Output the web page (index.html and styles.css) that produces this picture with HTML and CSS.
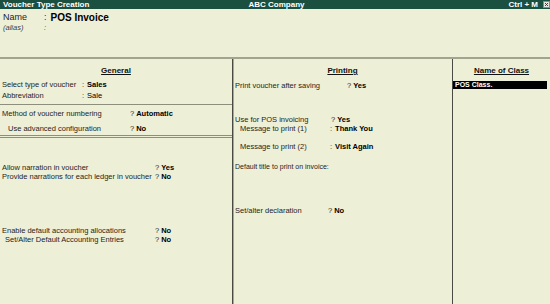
FILE: index.html
```html
<!DOCTYPE html>
<html>
<head>
    <title>Voucher Type Creation</title>
    <link rel="stylesheet" href="styles.css">
</head>
<body>
    <div class="title-bar">
        <div class="title-left">Voucher Type Creation</div>
        <div class="title-center">ABC Company</div>
        <div class="title-right">
            <span>Ctrl + M</span>
            <svg class="close-box" width="7" height="7" viewBox="0 0 7 7">
                <rect x="0.5" y="0.5" width="6" height="6" fill="#e6e6e0" stroke="#8a8a8a"/>
                <path d="M2 2 L5 5 M5 2 L2 5" stroke="#333" stroke-width="0.9"/>
            </svg>
        </div>
    </div>

    <div class="name-area">
        <div class="name-row">
            <span class="name-label">Name</span>
            <span class="sep">:</span>
            <span class="name-value">POS Invoice</span>
        </div>
        <div class="alias-row">
            <span class="name-label">(alias)</span>
            <span class="sep">:</span>
        </div>
    </div>

    <div class="columns">
        <div class="col col-general">
            <div class="col-title">General</div>

            <div class="section voucher-type">
                <div class="row"><span class="label">Select type of voucher</span><span class="sep">:</span> <span class="val">Sales</span></div>
                <div class="row"><span class="label">Abbreviation</span><span class="sep">:</span> <span class="val plain">Sale</span></div>
            </div>

            <div class="section numbering">
                <div class="row"><span class="label">Method of voucher numbering</span>? <span class="val">Automatic</span></div>
                <div class="row indent"><span class="label">Use advanced configuration</span>? <span class="val">No</span></div>
            </div>

            <div class="section narration">
                <div class="row"><span class="label">Allow narration in voucher</span>? <span class="val">Yes</span></div>
                <div class="row"><span class="label">Provide narrations for each ledger in voucher</span>? <span class="val">No</span></div>
            </div>

            <div class="section accounting">
                <div class="row"><span class="label">Enable default accounting allocations</span>? <span class="val">No</span></div>
                <div class="row indent"><span class="label">Set/Alter Default Accounting Entries</span>? <span class="val">No</span></div>
            </div>
        </div>

        <div class="col col-printing">
            <div class="col-title">Printing</div>

            <div class="row print-after"><span class="label">Print voucher after saving</span>? <span class="val">Yes</span></div>

            <div class="section pos">
                <div class="row"><span class="label">Use for POS invoicing</span>? <span class="val">Yes</span></div>
                <div class="row message"><span class="label">Message to print (1)</span><span class="sep">:</span> <span class="val">Thank You</span></div>
                <div class="row message second"><span class="label">Message to print (2)</span><span class="sep">:</span> <span class="val">Visit Again</span></div>
            </div>

            <div class="row default-title">Default title to print on invoice:</div>

            <div class="row declaration"><span class="label">Set/alter declaration</span>? <span class="val">No</span></div>
        </div>

        <div class="col col-class">
            <div class="col-title">Name of Class</div>
            <div class="class-item">POS Class.</div>
        </div>
    </div>
</body>
</html>
```

FILE: styles.css
```css
body {
    margin: 0;
    width: 550px;
    height: 304px;
    display: flex;
    flex-direction: column;
    font-family: "Liberation Sans", Arial, sans-serif;
    font-size: 7.5px;
    color: #1e1e1e;
    background-color: #edefd6;
    overflow: hidden;
}

/* top bar */
.title-bar {
    display: flex;
    height: 9px;
    line-height: 9px;
    background-color: #1b4f40;
    color: #fff;
    font-size: 8px;
    font-weight: bold;
}

.title-left {
    flex: 1;
    padding-left: 3px;
}

.title-right {
    flex: 1;
    display: flex;
    justify-content: flex-end;
    align-items: center;
    gap: 5px;
}

.close-box {
    display: block;
}

/* name block */
.name-area {
    box-sizing: border-box;
    height: 50px;
    padding: 3px 0 0 3px;
    border-bottom: 2px solid #a3a38f;
}

.name-row,
.alias-row {
    display: flex;
}

.name-row {
    line-height: 11px;
    font-size: 9px;
}

.name-label {
    width: 41px;
}

.name-row .sep {
    margin-right: 4px;
}

.name-value {
    font-size: 10px;
    font-weight: bold;
    color: #000;
}

.alias-row {
    line-height: 9px;
    font-style: italic;
    color: #3a3a3a;
}

/* columns */
.columns {
    flex: 1;
    display: flex;
}

.col-general {
    width: 232px;
}

.col-printing {
    width: 219px;
    border-left: 1px solid #4a4a44;
    box-shadow: inset 1px 0 #a8a894;
}

.col-class {
    flex: 1;
    border-left: 1px solid #4a4a44;
}

.col-title {
    margin-top: 7px;
    line-height: 9px;
    font-size: 8px;
    font-weight: bold;
    text-align: center;
    text-decoration: underline;
    color: #111;
}

.row {
    display: flex;
    line-height: 9px;
    padding-left: 2px;
    white-space: nowrap;
}

.label {
    flex-shrink: 0;
}

.sep {
    margin-right: 1px;
}

.val {
    margin-left: 2px;
    font-weight: bold;
    color: #000;
}

.val.plain {
    font-weight: normal;
}

/* general column */
.voucher-type {
    margin-top: 4px;
    padding-bottom: 3px;
    border-bottom: 1px solid #8e8e7c;
}

.voucher-type .row {
    line-height: 11px;
}

.voucher-type .label {
    width: 80px;
}

.numbering {
    padding: 3px 0 1px;
    border-bottom: 3px double #8e8e7c;
}

.numbering .row {
    line-height: 11px;
}

.numbering .row + .row {
    margin-top: 4px;
}

.numbering .label {
    width: 128px;
}

.numbering .indent {
    padding-left: 8px;
}

.numbering .indent .label {
    width: 122px;
}

.narration {
    margin-top: 25px;
}

.narration .label,
.accounting .label {
    width: 153px;
}

.accounting {
    margin-top: 45px;
}

.accounting .indent {
    padding-left: 5px;
}

.accounting .indent .label {
    width: 150px;
}

/* printing column */
.col-printing .row {
    padding-left: 2px;
}

.print-after {
    margin-top: 6px;
}

.print-after .label {
    width: 112px;
}

.pos {
    margin-top: 25px;
}

.pos .label {
    width: 96px;
}

.pos .message {
    padding-left: 7px;
}

.pos .message .label {
    width: 90px;
}

.pos .second {
    margin-top: 9px;
}

.default-title {
    margin-top: 11px;
    font-size: 7px;
}

.declaration {
    margin-top: 35px;
}

.declaration .label {
    width: 93px;
}

/* class column */
.class-item {
    margin: 6px 3px 0 0;
    height: 8px;
    line-height: 8px;
    padding-left: 2px;
    background-color: #000;
    color: #fff;
    font-size: 7px;
    font-weight: bold;
}
```
